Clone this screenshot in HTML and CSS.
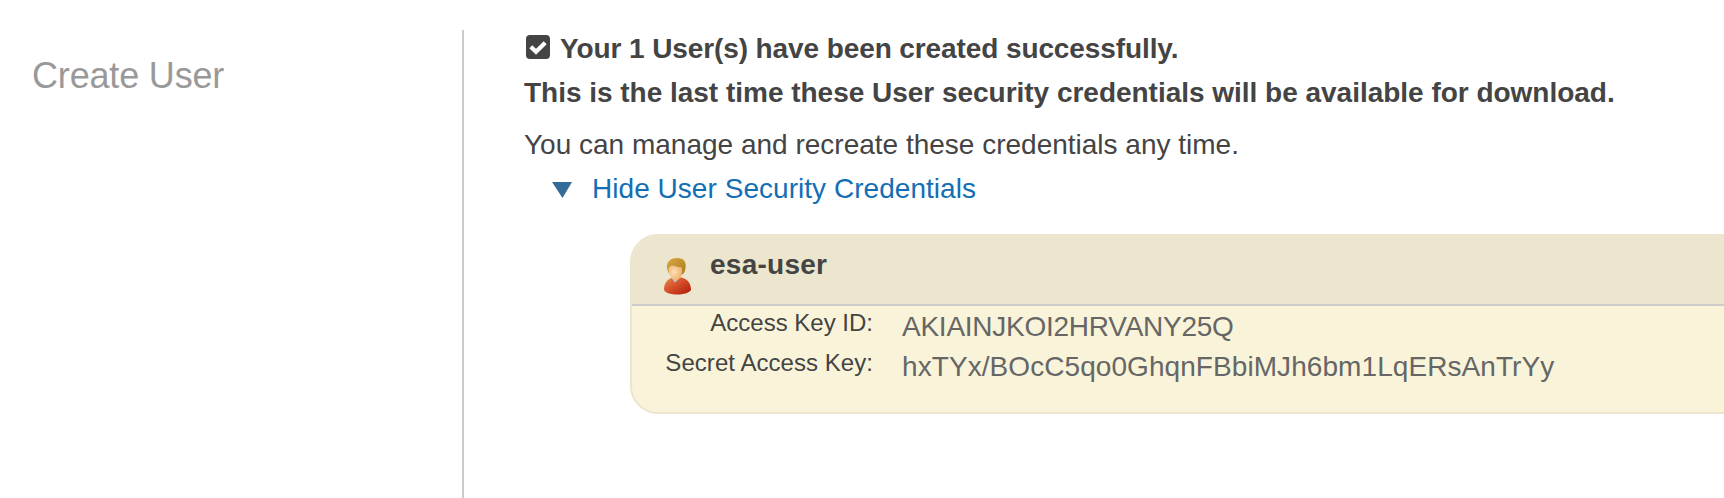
FILE: index.html
```html
<!DOCTYPE html>
<html lang="en">
<head>
	<meta charset="UTF-8">
	<title>Create User</title>
	<link rel="stylesheet" href="styles.css">
</head>
<body>
	<div id="wrap">
		<div class="side">
			<h1>Create User</h1>
		</div>
		<div class="main">
			<p class="msg">
				<svg class="check" width="24" height="24" viewBox="0 0 24 24">
					<rect width="24" height="24" rx="4" fill="#444"/>
					<path d="M4.800 11.800L10 16.800L19.200 7.800" fill="none" stroke="#fff" stroke-width="4.200"/>
				</svg>
				<span class="created">Your 1 User(s) have been created successfully.</span>
			</p>
			<p class="msg last">This is the last time these User security credentials will be available for download.</p>
			<p class="note">You can manage and recreate these credentials any time.</p>
			<a class="toggle" href="#">
				<svg class="arrow" width="20" height="16" viewBox="0 0 20 16">
					<path d="M0 0H20L10.5 16Z" fill="#336b99"/>
				</svg>
				<span>Hide User Security Credentials</span>
			</a>
			<div class="card">
				<div class="card-head">
					<svg class="user" width="30" height="38" viewBox="0 0 30 38">
						<defs>
							<linearGradient id="body" x1="0" y1="0" x2="1" y2="1">
								<stop offset="0" stop-color="#e88a4a"/>
								<stop offset=".45" stop-color="#d5502a"/>
								<stop offset="1" stop-color="#b01808"/>
							</linearGradient>
							<linearGradient id="hair" x1="0" y1="0" x2="1" y2="1">
								<stop offset="0" stop-color="#d9a945"/>
								<stop offset="1" stop-color="#a97a18"/>
							</linearGradient>
							<radialGradient id="face" cx=".4" cy=".45" r=".6">
								<stop offset="0" stop-color="#ffe0b5"/>
								<stop offset="1" stop-color="#eeb070"/>
							</radialGradient>
						</defs>
						<path d="M1 32C1 26 5 21.500 10 20.500H18C24 21.500 28 26 28 33C26 36 20 37.500 14.500 37.500C8 37.500 1 36 1 32Z" fill="url(#body)"/>
						<path d="M8.500 21L12 25.500L16.500 21Z" fill="#b4cbd8"/>
						<path d="M4 11C3.500 4 8 1 14 1C21 1 23.500 5 22.500 11C22 15 20.500 17 18.500 18H8C6 17 4.500 14 4 11Z" fill="url(#hair)"/>
						<path d="M5.500 12C6 9.500 7.500 8.500 10.500 8.500C13.500 10 15.500 10 18.500 10C19.800 14 19 18.500 17 21C14.500 23.800 11.500 23.800 9 21C6.500 18 5.300 15 5.500 12Z" fill="url(#face)"/>
					</svg>
					<span class="name">esa-user</span>
				</div>
				<dl class="keys">
					<dt class="key-id">Access Key ID:</dt>
					<dd class="val-id">AKIAINJKOI2HRVANY25Q</dd>
					<dt class="key-secret">Secret Access Key:</dt>
					<dd class="val-secret">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</dd>
				</dl>
			</div>
		</div>
	</div>
</body>
</html>
```
FILE: styles.css
```css
*{margin:0;padding:0;box-sizing:border-box;}
body{
	background-color: #fff;
	color: #444;
	font-family: "Liberation Sans", Arial, sans-serif;
	font-size: 28px;
	line-height: 44px;
	overflow: hidden;
}
svg{flex: none;}
#wrap{
	display: flex;
	height: 498px;
}
.side{
	flex: none;
	width: 464px;
	margin-top: 30px;
	padding: 24px 0 0 32px;
	border-right: 2px solid #ccc;
}
.side h1{
	font-size: 36px;
	font-weight: normal;
	letter-spacing: -0.17px;
	color: #999;
}
.main{
	flex: 1;
	min-width: 0;
	padding: 27px 0 0 60px;
	white-space: nowrap;
}
.msg{
	display: flex;
	font-weight: bold;
}
.check{
	margin: 8px 10px 0 2px;
}
.created{
	letter-spacing: -0.1px;
}
.last{
	letter-spacing: -0.02px;
}
.note{
	margin-top: 8px;
}
.toggle{
	display: flex;
	padding-left: 28px;
	color: #146eb4;
	letter-spacing: 0.04px;
	text-decoration: none;
}
.arrow{
	margin: 15px 20px 0 0;
}
/* runs past the right edge of the window */
.card{
	height: 180px;
	margin: 23px -40px 0 106px;
	border: 2px solid #ebe6cd;
	border-radius: 28px;
	background-color: #f9f4d9;
	overflow: hidden;
}
.card-head{
	display: flex;
	height: 70px;
	padding: 7px 0 0 31px;
	border-bottom: 2px solid #ccc;
	background-color: #ebe6cd;
	font-weight: bold;
}
.user{
	margin: 14px 17px 0 0;
}
.name{
	letter-spacing: 0.25px;
}
.keys{
	display: grid;
	grid-template-columns: 241px 1fr;
	grid-auto-rows: 40px;
	column-gap: 29px;
	line-height: 40px;
}
.keys dt{
	font-size: 24px;
	line-height: 34px;
	text-align: right;
}
.keys dd{
	padding-top: 1px;
	color: #666;
}
.key-secret{
	letter-spacing: 0.05px;
}
.keys .val-id{
	letter-spacing: -0.25px;
}
.keys .val-secret{
	letter-spacing: 0.07px;
}
```
